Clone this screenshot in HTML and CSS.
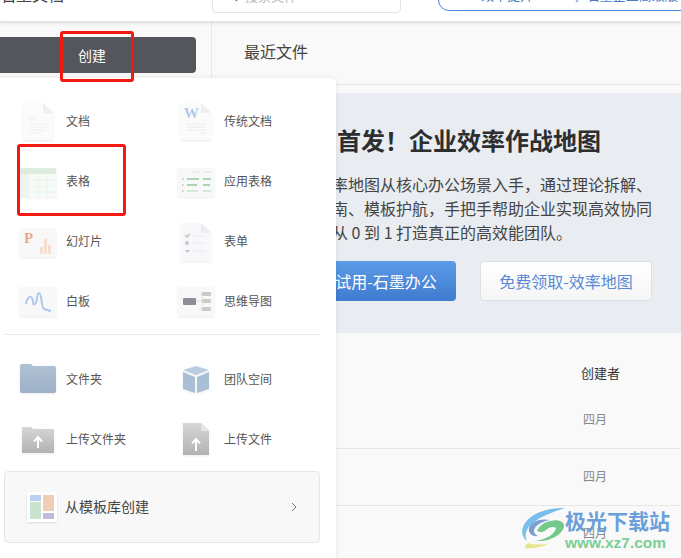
FILE: index.html
```html
<!DOCTYPE html>
<html lang="zh-CN">
<head>
<meta charset="utf-8">
<title>石墨文档</title>
<link rel="stylesheet" href="styles.css">
</head>
<body>
<div class="page">
  <header class="header">
    <div class="brand">石墨文档</div>
    <div class="search">
      <svg class="search-icon" width="12" height="12" viewBox="0 0 12 12"><circle cx="5" cy="5" r="3.6" fill="none" stroke="#777" stroke-width="1.4"/><path d="M8 8l3 3" stroke="#777" stroke-width="1.4"/></svg>
      <span>搜索文件</span>
    </div>
    <div class="notice"><span>效率提升1000%，石墨企业高级版【免费试用】</span></div>
  </header>

  <div class="layout">
    <aside class="sidebar">
      <button class="create">创建</button>
    </aside>
    <main class="main">
      <div class="topbar">最近文件</div>
      <section class="banner">
        <h1 class="banner-title">石墨文档首发！企业效率作战地图</h1>
        <p class="banner-text">本次发布的效率地图从核心办公场景入手，通过理论拆解、<br>以实战操作指南、模板护航，手把手帮助企业实现高效协同<br>的办公方式，从 0 到 1 打造真正的高效能团队。</p>
        <div class="banner-actions">
          <a class="btn btn-primary">免费试用-石墨办公</a>
          <a class="btn btn-ghost">免费领取-效率地图</a>
        </div>
      </section>
      <section class="table">
        <div class="thead"><span class="th">创建者</span></div>
        <div class="row"><span class="td">四月</span></div>
        <div class="row"><span class="td">四月</span></div>
        <div class="row"><span class="td">四月</span></div>
      </section>
    </main>
  </div>

  <div class="menu">
    <svg class="defs" width="0" height="0">
      <defs>
        <linearGradient id="gray" x1="0" y1="0" x2="0" y2="1"><stop offset="0" stop-color="#d6d6d6"/><stop offset="1" stop-color="#b2b2b2"/></linearGradient>
        <linearGradient id="blue" x1="0" y1="0" x2="0" y2="1"><stop offset="0" stop-color="#b2c2d4"/><stop offset="1" stop-color="#9db0c8"/></linearGradient>
      </defs>
    </svg>
    <div class="menu-grid">
      <div class="item">
        <svg class="icon" viewBox="0 0 38 40"><path d="M4 2h20l10 10v27H4z" fill="#fbfbfb"/><path d="M24 2l10 10H24z" fill="#efefef"/><path d="M10 16h7M10 19h5M10 23h18M10 26h18M10 29h16M10 32h10" stroke="#eeeeee" stroke-width="1"/></svg>
        <span>文档</span>
      </div>
      <div class="item">
        <svg class="icon" viewBox="0 0 38 40"><path d="M4 2h20l10 10v27H4z" fill="#fbfbfb"/><path d="M24 2l10 10H24z" fill="#efefef"/><text class="word-w" x="7" y="17">W</text><path d="M10 23h19M10 26h19M10 29h19M23 32h6" stroke="#ebebef" stroke-width="1"/></svg>
        <span>传统文档</span>
      </div>
      <div class="item">
        <svg class="icon" viewBox="0 0 38 40"><rect x="1" y="7" width="36" height="29" fill="#f7fbf8"/><rect x="1" y="7" width="36" height="6" fill="#dcecdf"/><rect x="1" y="13" width="9" height="23" fill="#f0f4f1"/><path d="M19 13v23M28 13v23M10 19h27M10 25h27M10 31h27" stroke="#e9f3ec" stroke-width="1"/></svg>
        <span>表格</span>
      </div>
      <div class="item">
        <svg class="icon" viewBox="0 0 38 40"><rect x="1" y="7" width="36" height="29" fill="#f8f8f8"/><path d="M14 11h8M27 11h7" stroke="#e6e6e6" stroke-width="1.5"/><path d="M10 18h12M26 18h8M10 24h10M26 24h7" stroke="#a9d5b1" stroke-width="2"/><path d="M10 30h11M26 30h8" stroke="#c8e4cd" stroke-width="1.5"/><path d="M5 18h1.5M5 24h1.5M5 30h1.5" stroke="#c0c0c0" stroke-width="1.5"/></svg>
        <span>应用表格</span>
      </div>
      <div class="item">
        <svg class="icon" viewBox="0 0 38 40"><rect x="1" y="7" width="36" height="29" fill="#f8f8f8"/><text class="ppt-p" x="5" y="22">P</text><path d="M21 26h3v7h-3zM25 18h3v15h-3zM29 24h3v9h-3z" fill="#f5dfd2"/></svg>
        <span>幻灯片</span>
      </div>
      <div class="item">
        <svg class="icon" viewBox="0 0 38 40"><path d="M4 2h20l10 10v28H4z" fill="#f8f8fa"/><path d="M24 2l10 10H24z" fill="#ececf0"/><path d="M8 14l2 2 3-3" fill="none" stroke="#bfc1cc" stroke-width="1.5"/><circle cx="10" cy="22" r="2" fill="#c4c6d0"/><path d="M8 29h5l-2.500 3z" fill="#bcbfd6"/><path d="M16 15h12M16 22h11M16 30h12" stroke="#e9eaee" stroke-width="1"/></svg>
        <span>表单</span>
      </div>
      <div class="item">
        <svg class="icon" viewBox="0 0 38 40"><rect x="1" y="6" width="36" height="29" fill="#f8f8f8"/><path d="M7 23C8 17 11 14 13 17S13 25 16 23 17 12 20 12 22 27 25 28 30 30 32 30" fill="none" stroke="#b0c9ea" stroke-width="2"/></svg>
        <span>白板</span>
      </div>
      <div class="item">
        <svg class="icon" viewBox="0 0 38 40"><rect x="1" y="6" width="36" height="29" fill="#f8f8f8"/><rect x="6" y="17" width="13" height="7" rx="1" fill="#8e8e98"/><rect x="25" y="11" width="9" height="4" fill="#cacaca"/><rect x="25" y="18" width="9" height="4" fill="#cacaca"/><rect x="25" y="26" width="9" height="4" fill="#cacaca"/><path d="M19 20h6M22 13h3v15h-3" fill="none" stroke="#e0e0e0" stroke-width="1"/></svg>
        <span>思维导图</span>
      </div>
    </div>
    <div class="menu-sep"></div>
    <div class="menu-grid">
      <div class="item">
        <svg class="icon" viewBox="0 0 38 40"><path d="M1 7q0-2 2-2h9l2 2h21q2 0 2 2v23q0 2-2 2H3q-2 0-2-2z" fill="url(#blue)"/></svg>
        <span>文件夹</span>
      </div>
      <div class="item">
        <svg class="icon" viewBox="0 0 38 40"><path d="M19 7l13 4-13 5-13-5z" fill="#b9cde0"/><path d="M6 13l12 5v16L6 30z" fill="#a8bfd6"/><path d="M32 13l-12 5v16l12-4z" fill="#a8bfd6"/></svg>
        <span>团队空间</span>
      </div>
      <div class="item">
        <svg class="icon" viewBox="0 0 38 40"><path d="M3 9q0-1 1-1h8l2 2h20q1 0 1 1v22q0 1-1 1H4q-1 0-1-1z" fill="url(#gray)"/><path d="M19 29v-10M15 22.500l4-4.500 4 4.500" fill="none" stroke="#fff" stroke-width="2"/></svg>
        <span>上传文件夹</span>
      </div>
      <div class="item">
        <svg class="icon" viewBox="0 0 38 40"><path d="M6 4h18l8 8v24H6z" fill="url(#gray)"/><path d="M24 4l8 8h-8z" fill="#e6e6e6"/><path d="M19 32v-12M15 24.500l4-4.500 4 4.500" fill="none" stroke="#fff" stroke-width="2"/></svg>
        <span>上传文件</span>
      </div>
    </div>
    <div class="template">
      <svg class="template-icon" viewBox="0 0 30 30"><rect width="30" height="30" fill="#fff"/><rect x="3" y="3" width="11" height="6" fill="#b9d2f0"/><rect x="3" y="10" width="11" height="17" fill="#c9e3cf"/><rect x="16" y="3" width="11" height="16" fill="#f0cdb5"/><rect x="16" y="21" width="11" height="6" fill="#c3b8dc"/></svg>
      <span class="template-label">从模板库创建</span>
      <svg class="chevron" width="6" height="10" viewBox="0 0 6 10"><path d="M1 1l4 4-4 4" fill="none" stroke="#777" stroke-width="1"/></svg>
    </div>
  </div>

  <div class="mark mark-create"></div>
  <div class="mark mark-sheet"></div>

  <div class="watermark">
    <svg class="swirl" width="46" height="42" viewBox="0 0 46 42">
      <path d="M44 1C26 1 8 6 2 20c-2 6 0 11 4 14-3-6-1-13 6-18C20 9 32 5 44 1z" fill="#79bdea"/>
      <path d="M29 13c-9-2-19 1-21 8-1 5 3 9 9 8-4-2-5-5-3-8 2-4 9-7 15-8z" fill="#7b9fd0"/>
      <path d="M16 24c3 2 7 1 9-1 3-3 8-4 10-2-1 6-9 11-20 13 14 1 26-6 28-14 1-5-6-8-13-6-7 1-12 5-14 10z" fill="#74c98a"/>
      <path d="M4 41c8 1 18-1 25-5-7 2-16 2-22 0-2 1-3 3-3 5z" fill="#e6e58c"/>
    </svg>
    <div class="wm-text">
      <div class="wm-cn">极光下载站</div>
      <div class="wm-en">www.xz7.com</div>
    </div>
  </div>
</div>
</body>
</html>
```
FILE: styles.css
```css
* { box-sizing: border-box; }
html, body { margin: 0; padding: 0; }
body { font-family: "Noto Sans CJK SC", "Liberation Sans", sans-serif; background: #f9f9fa; }

.page { position: relative; width: 681px; height: 558px; overflow: hidden; background: #f9f9fa; }

.header {
  position: relative; z-index: 2; display: flex; align-items: flex-end;
  height: 22px; overflow: hidden; background: #fff;
  border-bottom: 1px solid #e4e4e4;
  box-shadow: 0 1px 3px rgba(0,0,0,.12);
}
.brand { flex: none; width: 212px; height: 40px; margin-bottom: 15px; font-size: 16px; line-height: 24px; color: #444; padding-top: 16px; }
.search {
  display: flex; align-items: center; gap: 7px;
  width: 189px; height: 30px; margin-bottom: 8px; padding: 0 13px 4px; flex: none;
  border: 1px solid #e4e4e4; border-radius: 4px; background: #fff;
  font-size: 13px; line-height: 16px; color: #bbb;
}
.search-icon { flex: none; }
.notice {
  width: 280px; height: 30px; margin: 0 0 10px 37px; padding: 0 0 7px 42px; flex: none;
  border: 1px solid #4a8ade; border-radius: 11px;
  font-size: 13px; line-height: 16px; color: #4a7fc8; white-space: nowrap;
  display: flex; align-items: flex-end; overflow: hidden;
}

.layout { display: flex; height: 536px; }
.sidebar { width: 212px; flex: none; border-right: 1px solid #e9e9e9; padding-top: 15px; }
.create {
  display: block; width: 208px; height: 36px; margin-left: -12px; border: 0; border-radius: 4px;
  background: #54565b; color: #fff; font: 14px/36px "Noto Sans CJK SC", sans-serif; padding: 0;
}
.main { flex: 1; min-width: 0; }
.topbar {
  height: 63px; padding: 0 0 2px 32px; border-bottom: 1px solid #e8e8e8;
  font-size: 16px; line-height: 58px; color: #444;
}
.banner { margin-top: 8px; height: 240px; background: #e9ecf0; padding: 30px 0 0 29px; }
.banner-title { margin: 0; font-size: 24px; line-height: 34px; font-weight: 700; color: #2c2e30; white-space: nowrap; }
.banner-text { margin: 15px 0 0 -5px; font-size: 16px; line-height: 24px; color: #444; white-space: nowrap; }
.banner-actions { display: flex; gap: 24px; margin: 17px 0 0 43px; }
.btn {
  display: block; flex: none; width: 172px; height: 40px; border-radius: 4px; text-align: center;
  font-size: 16px; line-height: 38px;
}
.btn-primary { background: linear-gradient(#5b9be6, #3f7bcf); color: #fff; line-height: 40px; }
.btn-ghost { background: linear-gradient(#fff, #f5f5f6); border: 1px solid #dcdfe3; color: #5a8ad6; }

.thead { height: 59px; padding: 30px 0 0 369px; font-size: 13px; line-height: 20px; color: #333; }
.row { height: 57px; border-bottom: 1px solid #e6e6e6; padding: 18px 0 0 371px; font-size: 12px; line-height: 18px; color: #888; }

.menu {
  position: absolute; z-index: 3; left: 0; top: 78px; width: 336px; height: 490px;
  padding: 13px 16px 0 4px; background: #fff; border-radius: 0 5px 0 0;
  box-shadow: 0 0 6px rgba(0,0,0,.08);
}
.defs { position: absolute; }
.menu-grid { display: grid; grid-template-columns: 158px 158px; grid-auto-rows: 60px; }
.item { display: flex; align-items: center; gap: 9px; padding-left: 15px; font-size: 12px; line-height: 18px; color: #555; }
.item span { padding-bottom: 1px; }
.icon { width: 38px; height: 40px; flex: none; filter: drop-shadow(0 1px 1px rgba(0,0,0,.08)); }
.menu-sep { height: 1px; margin: 3px 0 14px; background: #e9e9e9; }
.word-w { font: 700 15px "Liberation Serif", serif; fill: #b4c8ea; }
.ppt-p { font: 700 15px "Liberation Serif", serif; fill: #e8a88c; }

.template {
  display: flex; align-items: center; gap: 9px; height: 72px; margin-top: 2px; padding: 0 22px;
  border: 1px solid #e6e6e6; border-radius: 4px; background: #f8f8f8;
}
.template-icon { width: 30px; height: 30px; flex: none; box-shadow: 0 1px 2px rgba(0,0,0,.12); }
.template-label { flex: 1; font-size: 14px; line-height: 20px; color: #444; margin-left: -1px; padding-bottom: 2px; }
.chevron { flex: none; }

.mark { position: absolute; z-index: 4; border: 3px solid #f2190f; border-radius: 3px; }
.mark-create { left: 60px; top: 31px; width: 74px; height: 51px; }
.mark-sheet { left: 17px; top: 144px; width: 109px; height: 72px; }

.watermark { position: absolute; z-index: 5; left: 521px; top: 507px; display: flex; }
.swirl { flex: none; }
.wm-text { margin-left: -2px; }
.wm-cn { font-size: 21px; line-height: 26px; font-weight: 700; color: #6a9fd8; white-space: nowrap; }
.wm-en { font: 700 15.500px/20px "Liberation Sans", sans-serif; color: #79cf93; white-space: nowrap; }
```
